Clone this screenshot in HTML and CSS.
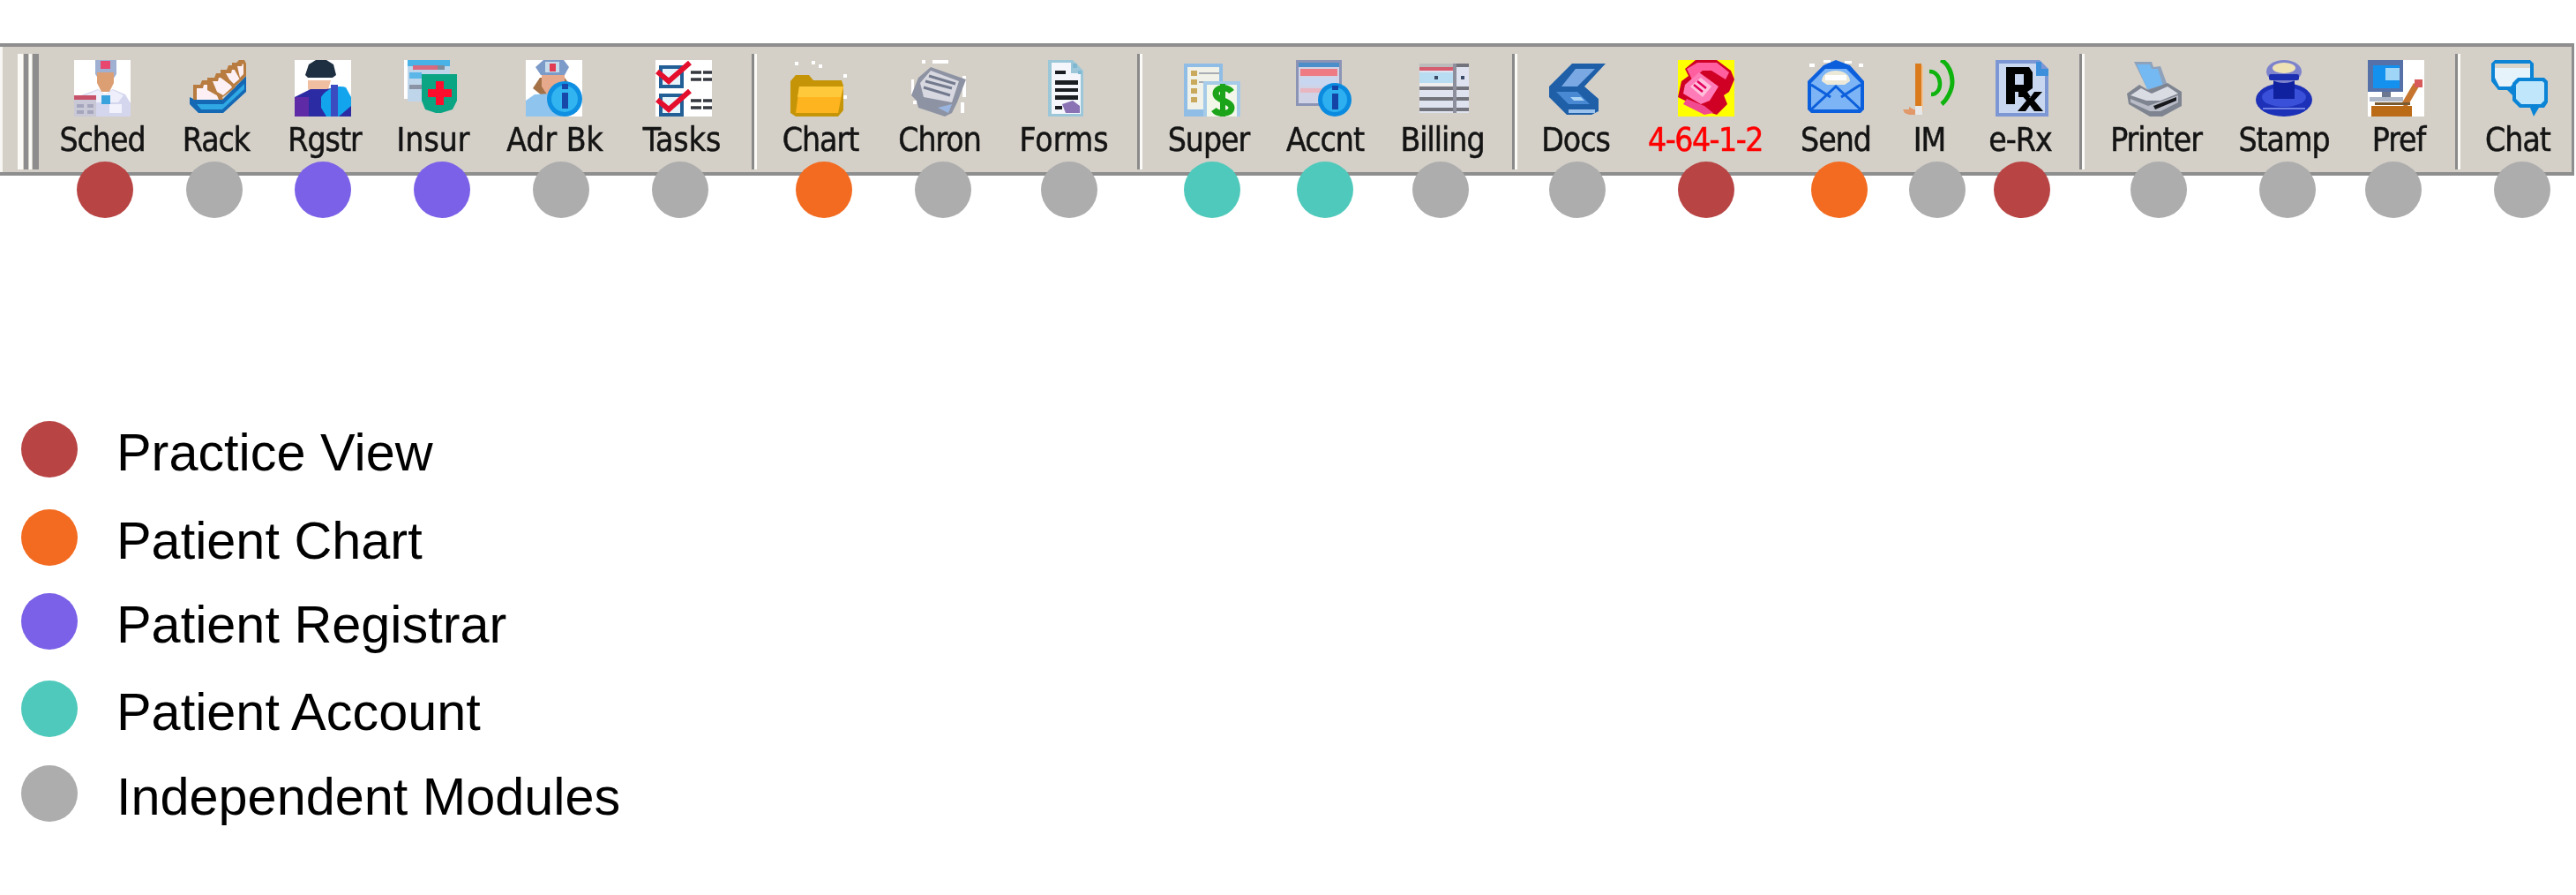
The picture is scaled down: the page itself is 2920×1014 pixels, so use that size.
FILE: index.html
```html
<!DOCTYPE html>
<html lang="en">
<head>
<meta charset="utf-8">
<title>Toolbar legend</title>
<link rel="stylesheet" href="styles.css">
</head>
<body>
<div class="toolbar">
  <div class="gripper"><span class="grip"></span><span class="grip grip-narrow"></span></div>

  <div class="tool t-sched"><div class="face">
    <svg class="icon" viewBox="0 0 64 64"><rect width="64" height="64" fill="#fff"/><path d="M24 0h24v16l-4 6H28l-4-6z" fill="#9fb0d2"/><rect x="30" y="1" width="11" height="9" fill="#e8476f"/><path d="M26 14h19v12l-5 10h-9l-5-10z" fill="#dc9f74"/><path d="M0 50 8 40 27 33l8 6 9-6 14 6 6 10v15H0z" fill="#d4d6ee"/><path d="M8 42 27 34l8 5 9-5 12 6-6 8H14z" fill="#eeeffa"/><rect x="31" y="40" width="10" height="10" fill="#3aa3dd"/><rect x="0" y="40" width="25" height="5" fill="#c7536b"/><rect x="0" y="45" width="25" height="19" fill="#c9c8d6"/><path d="M3 50h8v4H3zm12 0h7v4h-7zM3 57h8v4H3zm12 0h7v4h-7z" fill="#a5a6bd"/><rect x="40" y="50" width="14" height="10" fill="#f2f2fc"/></svg>
    <span class="label">Sched</span><i class="dot c-practice"></i></div></div>

  <div class="tool t-rack"><div class="face">
    <svg class="icon" viewBox="0 0 64 64"><path d="M0 42 6 45H37L64 18v18L38 60H10L0 50z" fill="#1468b4"/><path d="M8 50H38L62 27v6L37 56H13z" fill="#2fa8e4"/><g id="rack-card"><path d="M4 45V28h8l2-5h15l9 22z" fill="#b87c40"/><path d="M8 45V32h7l1-4h10l7 17z" fill="#fcf0f5"/></g><g><path d="M20 34V20h8l2-5h14l8 16-16 12z" fill="#b87c40"/><path d="M31 36 26 24h6l1-4h9l6 11-10 9z" fill="#fcf0f5"/></g><g><path d="M35 20V11h7l2-5h12l5 15-11 10z" fill="#b87c40"/><path d="M45 22 41 15h6l1-4h6l3 10-7 6z" fill="#fcf0f5"/></g><path d="M48 6V3h5l3-3h6l2 4v14l-6 6z" fill="#b87c40"/><path d="M54 7h5l1-3 1 1v11l-4 4z" fill="#fcf0f5"/></svg>
    <span class="label">Rack</span><i class="dot c-indep"></i></div></div>

  <div class="tool t-rgstr"><div class="face">
    <svg class="icon" viewBox="0 0 64 64"><rect width="64" height="64" fill="#fff"/><path d="M15 32 18 41H35L38 33l3-10H15z" fill="#f0bfa2"/><path d="M12 17 16 5 24 0h12l8 5 3 12-4 3H15z" fill="#1f2f42"/><path d="M0 42 18 33h18l16-3 12 20v14H0z" fill="#2b2ba3"/><rect y="42" width="16" height="22" fill="#5e2aa6"/><path d="M30 42C36 32 50 28 58 31L64 42v10L50 64H36L30 54z" fill="#12a5ed"/><rect x="41" y="28" width="8" height="36" fill="#3b4cc0"/></svg>
    <span class="label">Rgstr</span><i class="dot c-registrar"></i></div></div>

  <div class="tool t-insur"><div class="face">
    <svg class="icon icon-wide" viewBox="0 0 62 62"><rect width="4" height="44" fill="#fff"/><rect x="4" width="48" height="47" fill="#bfd6ea"/><rect x="4" y="0" width="48" height="7" fill="#49b2e6"/><rect x="10" y="6" width="30" height="5" fill="#d8697f"/><rect x="38" y="6" width="8" height="5" fill="#7d8c9c"/><rect x="6" y="14" width="14" height="7" fill="#5cb6e8"/><rect x="6" y="28" width="18" height="5" fill="#8b94a4"/><path d="M20 16H60V46L55 56 42 60h-6L24 56 20 46z" fill="#0ba584"/><path d="M30 34h9V25h9v9h9v9h-9v9h-9v-9h-9z" transform="translate(-3 -1)" fill="#ff0d2c"/></svg>
    <span class="label label-wide">Insur</span><i class="dot c-registrar"></i></div></div>

  <div class="tool t-adr"><div class="face">
    <svg class="icon" viewBox="0 0 64 64"><rect width="64" height="64" fill="#fff"/><path d="M12 26 8 32 18 40H38L50 28 44 20H16z" fill="#a57247"/><path d="M11 8 20 0h23l6 8-5 9H17z" fill="#7c9bc9"/><rect x="22" y="2" width="16" height="12" fill="#c7dcea"/><rect x="27" y="4" width="7" height="9" fill="#e23c52"/><path d="M18 17H44V28L34 42H26L18 30z" fill="#e6a98c"/><path d="M0 46 10 39 28 38 40 64H0z" fill="#8fc4ef"/><circle cx="44" cy="44" r="20" fill="#0e8fe2"/><circle cx="44" cy="44" r="15" fill="#31b4ef"/><rect x="41" y="27" width="7" height="6" fill="#1747a8"/><rect x="41" y="37" width="7" height="18" fill="#1747a8"/></svg>
    <span class="label label-wide">Adr Bk</span><i class="dot c-indep"></i></div></div>

  <div class="tool t-tasks"><div class="face">
    <svg class="icon" viewBox="0 0 64 64"><rect width="64" height="64" fill="#fff"/><rect x="4" y="6" width="28" height="26" fill="#235f97"/><rect x="8" y="10" width="20" height="18" fill="#e7f3fb"/><rect x="4" y="38" width="28" height="26" fill="#235f97"/><rect x="8" y="42" width="20" height="18" fill="#e7f3fb"/><path d="M2 13 15 24 39 3" fill="none" stroke="#e40f2c" stroke-width="6"/><path d="M2 45 15 56 39 35" fill="none" stroke="#e40f2c" stroke-width="6"/><path d="M40 14h24M40 22h24M40 46h24M40 54h24" stroke="#35383f" stroke-width="3.5" stroke-dasharray="12 2"/></svg>
    <span class="label label-wide">Tasks</span><i class="dot c-indep"></i></div></div>

  <span class="sep sep-chart"></span>

  <div class="tool t-chart"><div class="face">
    <svg class="icon" viewBox="0 0 64 64"><path d="M0 24 6 17h15l5 6H58l2 6v28l-6 7H6l-6-4z" fill="#c59507"/><path d="M10 30H60L54 60H6z" fill="#fdb41f"/><path d="M10 30H60L57 42H8z" fill="#ffc93c"/><path d="M5 2h4v4H5zM24 1h4v4h-4zM32 5h4v4h-4zM60 16h4v4h-4zM60 40h4v4h-4z" fill="#fff"/></svg>
    <span class="label">Chart</span><i class="dot c-chart"></i></div></div>

  <div class="tool t-chron"><div class="face">
    <svg class="icon" viewBox="0 0 64 64"><path d="M12 0h4v4h-4zM24 0h18v4H24zM0 22h3v18H0zM58 18h4v24h-4zM56 48h4v12h-4zM2 46h4v4H2z" fill="#fff"/><path d="M0 40 8 20 22 8l40 14-10 26-6 12-8 4-30-10L6 46z" fill="#8e93a4"/><path d="M10 26 22 12 54 24 46 48 14 42z" fill="#d7d8e0"/><path d="M16 24 46 32M14 31 44 40M20 18 50 27" stroke="#737a8d" stroke-width="3"/><path d="M30 54 46 50 42 60z" fill="#9ab6e0"/></svg>
    <span class="label">Chron</span><i class="dot c-indep"></i></div></div>

  <div class="tool t-forms"><div class="face">
    <svg class="icon" viewBox="0 0 64 64"><path d="M12 0H40L52 12V64H12z" fill="#9cc7d8"/><path d="M16 3H38V15H49V61H16z" fill="#f4f6fb"/><path d="M20 12h12v4H20zM20 23h26v5H20zM20 32h26v4H20zM20 40h26v5H20zM20 52h8v4h-8z" fill="#1a1d22"/><path d="M28 50 40 46 48 52V60H32z" fill="#8b72b5"/><path d="M40 4h5v5h-5zM46 12h4v4h-4z" fill="#7fb8d0"/></svg>
    <span class="label label-wide">Forms</span><i class="dot c-indep"></i></div></div>

  <span class="sep sep-super"></span>

  <div class="tool t-super"><div class="face">
    <svg class="icon" viewBox="0 0 64 64"><rect x="0" y="4" width="44" height="60" fill="#8fbde6"/><rect x="4" y="8" width="36" height="48" fill="#f0f1e8"/><path d="M8 12h7v6H8zM8 22h7v6H8zM8 32h7v6H8zM8 42h7v6H8z" fill="#c9a95c"/><path d="M17 15H40M17 25H28" stroke="#a9adb3" stroke-width="2"/><rect x="22" y="24" width="42" height="40" fill="#a5cbe9"/><rect x="26" y="28" width="34" height="36" fill="#f2f7ea"/><path d="M54 36C50 30 36 30 36 38S54 46 54 54 38 62 34 56" fill="none" stroke="#1ba419" stroke-width="7"/><rect x="41" y="27" width="6" height="37" fill="#1ba419"/></svg>
    <span class="label">Super</span><i class="dot c-account"></i></div></div>

  <div class="tool t-accnt"><div class="face">
    <svg class="icon" viewBox="0 0 64 64"><rect y="0" width="52" height="52" fill="#8b94b5"/><rect x="3" y="3" width="46" height="46" fill="#d0d3e6"/><rect x="3" y="3" width="46" height="5" fill="#4c8ec9"/><rect x="5" y="10" width="42" height="8" fill="#ee7b84"/><rect x="5" y="32" width="42" height="5" fill="#e8b6c0"/><rect x="5" y="20" width="40" height="9" fill="#c9d6f0"/><circle cx="44" cy="45" r="19" fill="#0a8be0"/><circle cx="44" cy="45" r="14" fill="#2eaff0"/><rect x="41" y="29" width="7" height="5" fill="#1444a5"/><rect x="41" y="38" width="7" height="18" fill="#1444a5"/></svg>
    <span class="label">Accnt</span><i class="dot c-account"></i></div></div>

  <div class="tool t-billing"><div class="face">
    <svg class="icon" viewBox="0 0 64 64"><rect x="4" y="4" width="56" height="56" fill="#dfe3f0"/><rect x="4" y="4" width="40" height="4" fill="#bbb"/><rect x="4" y="8" width="40" height="4" fill="#d45c6e"/><rect x="4" y="14" width="40" height="12" fill="#b8dcf2"/><path d="M4 26h40v4H4z" fill="#eee"/><path d="M4 30h56v4H4zM4 42h56v4H4zM4 54h56v4H4zM44 4h16v4H44z" fill="#73737b"/><rect x="42" y="4" width="4" height="56" fill="#8d8f9c"/><path d="M21 18h4v4h-4zM51 18h4v4h-4z" fill="#3b4a66"/></svg>
    <span class="label">Billing</span><i class="dot c-indep"></i></div></div>

  <span class="sep sep-docs"></span>

  <div class="tool t-docs"><div class="face">
    <svg class="icon" viewBox="0 0 64 64"><path d="M0 30 26 4H64L40 30 56 44v14L48 62H20L0 42z" fill="#1e5fa8"/><path d="M14 30 30 10H52L32 30z" fill="#7aa8e3"/><path d="M8 36H32L46 50H22z" fill="#4988d2"/><path d="M22 56H52V60H22z" fill="#9cc3ee"/><path d="M24 42H36L40 46H28z" fill="#a9d2f5"/></svg>
    <span class="label">Docs</span><i class="dot c-indep"></i></div></div>

  <div class="tool t-fax"><div class="face">
    <svg class="icon" viewBox="0 0 64 64"><rect width="64" height="64" fill="#ffff00"/><path d="M8 10 20 0H44L60 12l4 10-6 14-6 4 4 10-12 12-12-4L0 42l4-18 8-6z" fill="#d00024"/><path d="M10 10 22 3H44L58 14 54 22 38 12H28L16 22z" fill="#ff5f9f"/><path d="M8 28 24 14 46 30 36 46 26 50 6 38z" fill="#ff7cb8"/><path d="M14 30 26 20 38 30 28 42z" fill="#ffc0dc"/><path d="M18 28 28 36M22 24 32 32" stroke="#e2005c" stroke-width="2.5"/><path d="M10 44 30 52 40 60 30 62 6 50z" fill="#f24a90"/></svg>
    <span class="label label-red">4-64-1-2</span><i class="dot c-practice"></i></div></div>

  <div class="tool t-send"><div class="face">
    <svg class="icon" viewBox="0 0 64 64"><path d="M0 24 18 6 32 0 48 6 64 24V56L60 60H4L0 56z" fill="#0c5fdc"/><path d="M4 26 20 10H44L60 26V56H4z" fill="#7cb4f5"/><path d="M16 24C16 16 24 12 32 12s16 4 16 12l-6 4H22z" fill="#ece9d8"/><rect x="20" y="17" width="24" height="6" fill="#fff"/><path d="M4 28 26 42M60 28 38 42M4 56 32 30 60 56" fill="none" stroke="#0c5fdc" stroke-width="3"/><path d="M2 4h6v4H2zM18 0h8v3h-8zM42 1h8v3h-8zM58 4h5v4h-5z" fill="#fff"/></svg>
    <span class="label">Send</span><i class="dot c-chart"></i></div></div>

  <div class="tool t-im"><div class="face">
    <svg class="icon" viewBox="0 0 64 64"><rect x="14" y="4" width="7" height="54" fill="#d97a1d"/><rect x="21" y="6" width="2" height="52" fill="#f2c08e"/><path d="M0 56h7v-3l5 3h10v6H7l-5-2z" fill="#e2996a"/><rect x="14" y="52" width="8" height="10" fill="#e7e7e7"/><path d="M30 13C38 13 42 20 42 27s-4 12-10 12" fill="none" stroke="#0eb30e" stroke-width="4.5"/><path d="M43 0C52 4 56 16 56 25s-6 20-12 25" fill="none" stroke="#0eb30e" stroke-width="5"/></svg>
    <span class="label">IM</span><i class="dot c-indep"></i></div></div>

  <div class="tool t-erx"><div class="face">
    <svg class="icon" viewBox="0 0 64 64"><path d="M0 0H50L60 10V64H0z" fill="#7c97d4"/><path d="M4 4H46L56 14V60H4z" fill="#c8d7ef"/><path d="M46 2h6v8h8v8H46z" fill="#3d8fdc"/><path d="M12 8H38l4 6V32L36 36l4 6H26V36H22V50H12zM22 16V28H32V16z" fill="#000" fill-rule="evenodd"/><path d="M26 36h8l5 7 5-7h9l-9 10 10 12H44l-5-7-5 7H25l10-12z" fill="#000"/></svg>
    <span class="label">e-Rx</span><i class="dot c-practice"></i></div></div>

  <span class="sep sep-printer"></span>

  <div class="tool t-printer"><div class="face">
    <svg class="icon" viewBox="0 0 64 64"><path d="M8 2h20l2 6 8-1 8 22-22 6z" fill="#8fa2bb"/><path d="M11 5h15l2 5 7 0 6 19-18 4z" fill="#74b9f2"/><path d="M0 38 14 28 24 34 46 26 62 36V52L40 64H26L2 50z" fill="#7f8590"/><path d="M4 40 16 32 28 38 46 30 58 38 38 46H22z" fill="#dadce4"/><path d="M4 44 24 52 58 40V48L38 58H26L4 48z" fill="#b9bcc6"/><path d="M30 52 56 42V46L32 56z" fill="#16181c"/></svg>
    <span class="label">Printer</span><i class="dot c-indep"></i></div></div>

  <div class="tool t-stamp"><div class="face">
    <svg class="icon" viewBox="0 0 64 64"><ellipse cx="32" cy="45" rx="32" ry="19" fill="#1c30b8"/><ellipse cx="32" cy="42" rx="25" ry="11" fill="#3a50d8"/><rect x="20" y="20" width="24" height="24" fill="#0f219e"/><ellipse cx="32" cy="13" rx="20" ry="13" fill="#7d83cc"/><ellipse cx="32" cy="9" rx="13" ry="6" fill="#efe3b6"/><rect x="15" y="16" width="34" height="7" rx="2" fill="#1c2fb0"/><rect x="8" y="54" width="48" height="2" fill="#6f80e2"/></svg>
    <span class="label">Stamp</span><i class="dot c-indep"></i></div></div>

  <div class="tool t-pref"><div class="face">
    <svg class="icon" viewBox="0 0 64 64"><rect width="64" height="64" fill="#fff"/><rect width="40" height="36" fill="#5670a8"/><rect x="6" y="6" width="30" height="26" fill="#1491ee"/><rect x="20" y="9" width="16" height="14" fill="#9fd6f7"/><rect x="16" y="36" width="10" height="8" fill="#6b7890"/><rect x="2" y="42" width="38" height="5" fill="#aeb7c8"/><path d="M38 50 52 26 58 30 44 54z" fill="#c6752f"/><rect x="53" y="22" width="9" height="9" fill="#d85a5a"/><rect x="4" y="52" width="46" height="12" fill="#bb6a16"/><rect x="8" y="48" width="40" height="3" fill="#7a5a30"/></svg>
    <span class="label">Pref</span><i class="dot c-indep"></i></div></div>

  <span class="sep sep-chat"></span>

  <div class="tool t-chat"><div class="face">
    <svg class="icon" viewBox="0 0 64 64"><path d="M4 0H44L48 4V26H28l-2 16-8-8H8L0 24V4z" fill="#0b84d6"/><path d="M4 4H44V22H28l-6 8H9L4 20z" fill="#e6f3fb"/><rect x="4" y="4" width="40" height="5" fill="#d8d5cc"/><path d="M30 20H60L64 24V48L60 54H54L48 64 44 54H32L24 46V26z" fill="#0b84d6"/><path d="M32 24H58L60 26V46L56 50H34L28 44V28z" fill="#bfe6fb"/></svg>
    <span class="label">Chat</span><i class="dot c-indep"></i></div></div>
</div>

<ul class="legend">
  <li class="legend-row"><i class="swatch c-practice"></i><span class="legend-text">Practice View</span></li>
  <li class="legend-row"><i class="swatch c-chart"></i><span class="legend-text">Patient Chart</span></li>
  <li class="legend-row"><i class="swatch c-registrar"></i><span class="legend-text">Patient Registrar</span></li>
  <li class="legend-row"><i class="swatch c-account"></i><span class="legend-text">Patient Account</span></li>
  <li class="legend-row"><i class="swatch c-indep"></i><span class="legend-text">Independent Modules</span></li>
</ul>
</body>
</html>
```

FILE: styles.css
```css
* { box-sizing: border-box; }

html, body {
  margin: 0;
  padding: 0;
  background: #fff;
}

body {
  width: 2920px;
  height: 1014px;
  overflow: hidden;
  padding-top: 49px;
}

.toolbar {
  display: flex;
  align-items: flex-start;
  width: 2918px;
  height: 150px;
  background: #d4d0c8;
  border-top: 4px solid #8e8e8e;
  border-bottom: 4px solid #8e8e8e;
  border-right: 3px solid #8e8e8e;
  box-shadow: inset 7px 3px 0 -4px #f7f6f2;
  padding-top: 8px;
}

.gripper {
  display: flex;
  flex: none;
  margin-left: 20px;
  margin-right: 72px;
  gap: 1px;
}

.grip {
  width: 12px;
  height: 131px;
  border-left: 6px solid #fbfaf7;
  border-right: 5px solid #8d8d8d;
  filter: blur(.5px);
}

.grip-narrow {
  width: 11px;
  border-left-width: 3px;
  border-right-width: 7px;
}

.sep {
  flex: none;
  width: 6px;
  height: 131px;
  border-left: 3px solid #8a8a8a;
  border-right: 3px solid #fbfaf7;
}

.sep-chart { margin-right: 72px; }
.sep-super { margin-right: 75px; }
.sep-docs { margin-right: 66px; }
.sep-printer { margin-right: 81px; }
.sep-chat { margin-right: 65px; }

.tool {
  flex: none;
  width: var(--adv);
  height: 131px;
}

.face {
  display: flex;
  flex-direction: column;
  align-items: center;
  width: 160px;
  margin-left: -80px;
}

.icon {
  display: block;
  flex: none;
  width: 64px;
  height: 64px;
  margin-top: 7px;
  transform: translateX(var(--i, 0));
  filter: blur(.7px);
}

.icon-wide {
  width: 62px;
  height: 62px;
  margin-bottom: 2px;
}

.label {
  display: block;
  height: 46px;
  margin-top: 4px;
  font-family: "DejaVu Sans Condensed", "DejaVu Sans", sans-serif;
  font-stretch: condensed;
  font-size: 37px;
  line-height: 46px;
  letter-spacing: -1px;
  color: #141414;
  white-space: nowrap;
  filter: blur(.6px);
  -webkit-text-stroke: .5px #141414;
}

.label-wide {
  letter-spacing: 0;
}

.label-red {
  color: #ff0000;
  -webkit-text-stroke: .5px #ff0000;
  letter-spacing: -1.5px;
}

.dot {
  display: block;
  flex: none;
  width: 64px;
  height: 64px;
  margin-top: 1px;
  border-radius: 50%;
  transform: translateX(var(--d, 0));
}

.c-practice { background: #b84444; }
.c-chart { background: #f26b21; }
.c-registrar { background: #7b61e8; }
.c-account { background: #4fc9bb; }
.c-indep { background: #adadad; }

.t-sched { --adv: 129px; --i: 0px; --d: 3px; }
.t-rack { --adv: 123px; --i: 2px; --d: -2px; }
.t-rgstr { --adv: 123px; --i: -2px; --d: -2px; }
.t-insur { --adv: 138px; --i: -2px; --d: 10px; }
.t-adr { --adv: 144px; --i: -1px; --d: 7px; }
.t-tasks { --adv: 79px; --i: 2px; --d: -2px; }
.t-chart { --adv: 135px; --i: -2px; --d: 4px; }
.t-chron { --adv: 141px; --i: 0px; --d: 4px; }
.t-forms { --adv: 83px; --i: 2px; --d: 6px; }
.t-super { --adv: 132px; --i: 4px; --d: 4px; }
.t-accnt { --adv: 133px; --i: -1px; --d: 0px; }
.t-billing { --adv: 79px; --i: 2px; --d: -2px; }
.t-docs { --adv: 147px; --i: 2px; --d: 2px; }
.t-fax { --adv: 148px; --i: 1px; --d: 1px; }
.t-send { --adv: 106px; --i: 0px; --d: 4px; }
.t-im { --adv: 103px; --i: 2px; --d: 9px; }
.t-erx { --adv: 67px; --i: 4px; --d: 2px; }
.t-printer { --adv: 145px; --i: -1px; --d: 3px; }
.t-stamp { --adv: 130px; --i: 0px; --d: 4px; }
.t-pref { --adv: 64px; --i: -3px; --d: -6px; }
.t-chat { --adv: 65px; --i: 2px; --d: 5px; }

.legend {
  display: grid;
  grid-template-rows: 100px 95px 99px 96px 64px;
  list-style: none;
  margin: 278px 0 0 24px;
  padding: 0;
}

.legend-row {
  display: flex;
  align-items: flex-start;
}

.swatch {
  display: block;
  flex: none;
  width: 64px;
  height: 64px;
  border-radius: 50%;
}

.legend-text {
  margin-top: 4px;
  margin-left: 44px;
  font-family: "Liberation Sans", Arial, sans-serif;
  font-size: 59.4px;
  line-height: 64px;
  color: #000;
  white-space: nowrap;
}
```
